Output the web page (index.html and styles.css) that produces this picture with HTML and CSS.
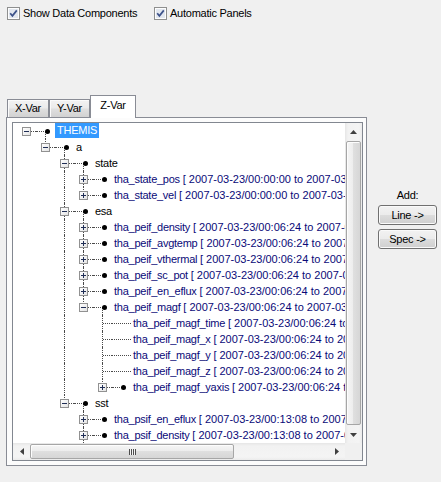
FILE: index.html
```html
<!DOCTYPE html>
<html>
<head>
<meta charset="utf-8">
<link rel="stylesheet" href="styles.css">
</head>
<body>
<div class="options">
  <label class="opt opt-wide">
    <svg class="cb" width="13" height="13" viewBox="0 0 13 13"><rect x=".5" y=".5" width="12" height="12" fill="#fdfdfd" stroke="#8e8f8f"/><rect x="2" y="2" width="9" height="9" fill="#e2e7ef"/><path d="M3.2 6.2 L5.4 8.8 L9.8 3.4" fill="none" stroke="#3d528a" stroke-width="1.7"/></svg>
    <span>Show Data Components</span>
  </label>
  <label class="opt">
    <svg class="cb" width="13" height="13" viewBox="0 0 13 13"><rect x=".5" y=".5" width="12" height="12" fill="#fdfdfd" stroke="#8e8f8f"/><rect x="2" y="2" width="9" height="9" fill="#e2e7ef"/><path d="M3.2 6.2 L5.4 8.8 L9.8 3.4" fill="none" stroke="#3d528a" stroke-width="1.7"/></svg>
    <span>Automatic Panels</span>
  </label>
</div>

<div class="main">
  <div class="tabctl">
    <div class="tabstrip">
      <div class="tab tab-x">X-Var</div>
      <div class="tab tab-y">Y-Var</div>
      <div class="tab tab-z">Z-Var</div>
    </div>
    <div class="tabpage">
      <div class="tree">
        <div class="content">
          <div class="row"><span class="c n"><i class="box minus"></i></span><span class="c h down"><i class="dot"></i></span><span class="label sel">THEMIS</span></div>
          <div class="row"><span class="c"></span><span class="c l"><i class="box minus"></i></span><span class="c h down"><i class="dot"></i></span><span class="label">a</span></div>
          <div class="row"><span class="c"></span><span class="c"></span><span class="c t"><i class="box minus"></i></span><span class="c h down"><i class="dot"></i></span><span class="label">state</span></div>
          <div class="row"><span class="c"></span><span class="c"></span><span class="c v"></span><span class="c t"><i class="box plus"></i></span><span class="c h"><i class="dot"></i></span><span class="label data">tha_state_pos <span class="range">[ 2007-03-23/00:00:00 to 2007-03-24/00:00:00 ]</span></span></div>
          <div class="row"><span class="c"></span><span class="c"></span><span class="c v"></span><span class="c l"><i class="box plus"></i></span><span class="c h"><i class="dot"></i></span><span class="label data">tha_state_vel <span class="range">[ 2007-03-23/00:00:00 to 2007-03-24/00:00:00 ]</span></span></div>
          <div class="row"><span class="c"></span><span class="c"></span><span class="c t"><i class="box minus"></i></span><span class="c h down"><i class="dot"></i></span><span class="label">esa</span></div>
          <div class="row"><span class="c"></span><span class="c"></span><span class="c v"></span><span class="c t"><i class="box plus"></i></span><span class="c h"><i class="dot"></i></span><span class="label data">tha_peif_density <span class="range">[ 2007-03-23/00:06:24 to 2007-03-23/23:57:13 ]</span></span></div>
          <div class="row"><span class="c"></span><span class="c"></span><span class="c v"></span><span class="c t"><i class="box plus"></i></span><span class="c h"><i class="dot"></i></span><span class="label data">tha_peif_avgtemp <span class="range">[ 2007-03-23/00:06:24 to 2007-03-23/23:57:13 ]</span></span></div>
          <div class="row"><span class="c"></span><span class="c"></span><span class="c v"></span><span class="c t"><i class="box plus"></i></span><span class="c h"><i class="dot"></i></span><span class="label data">tha_peif_vthermal <span class="range">[ 2007-03-23/00:06:24 to 2007-03-23/23:57:13 ]</span></span></div>
          <div class="row"><span class="c"></span><span class="c"></span><span class="c v"></span><span class="c t"><i class="box plus"></i></span><span class="c h"><i class="dot"></i></span><span class="label data">tha_peif_sc_pot <span class="range">[ 2007-03-23/00:06:24 to 2007-03-23/23:57:13 ]</span></span></div>
          <div class="row"><span class="c"></span><span class="c"></span><span class="c v"></span><span class="c t"><i class="box plus"></i></span><span class="c h"><i class="dot"></i></span><span class="label data">tha_peif_en_eflux <span class="range">[ 2007-03-23/00:06:24 to 2007-03-23/23:57:13 ]</span></span></div>
          <div class="row"><span class="c"></span><span class="c"></span><span class="c v"></span><span class="c l"><i class="box minus"></i></span><span class="c h down"><i class="dot"></i></span><span class="label data">tha_peif_magf <span class="range">[ 2007-03-23/00:06:24 to 2007-03-23/23:57:13 ]</span></span></div>
          <div class="row"><span class="c"></span><span class="c"></span><span class="c v"></span><span class="c"></span><span class="c t"></span><span class="c h full"></span><span class="label data">tha_peif_magf_time <span class="range">[ 2007-03-23/00:06:24 to 2007-03-23/23:57:13 ]</span></span></div>
          <div class="row"><span class="c"></span><span class="c"></span><span class="c v"></span><span class="c"></span><span class="c t"></span><span class="c h full"></span><span class="label data">tha_peif_magf_x <span class="range">[ 2007-03-23/00:06:24 to 2007-03-23/23:57:13 ]</span></span></div>
          <div class="row"><span class="c"></span><span class="c"></span><span class="c v"></span><span class="c"></span><span class="c t"></span><span class="c h full"></span><span class="label data">tha_peif_magf_y <span class="range">[ 2007-03-23/00:06:24 to 2007-03-23/23:57:13 ]</span></span></div>
          <div class="row"><span class="c"></span><span class="c"></span><span class="c v"></span><span class="c"></span><span class="c t"></span><span class="c h full"></span><span class="label data">tha_peif_magf_z <span class="range">[ 2007-03-23/00:06:24 to 2007-03-23/23:57:13 ]</span></span></div>
          <div class="row"><span class="c"></span><span class="c"></span><span class="c v"></span><span class="c"></span><span class="c l"><i class="box plus"></i></span><span class="c h"><i class="dot"></i></span><span class="label data">tha_peif_magf_yaxis <span class="range">[ 2007-03-23/00:06:24 to 2007-03-23/23:57:13 ]</span></span></div>
          <div class="row"><span class="c"></span><span class="c"></span><span class="c l"><i class="box minus"></i></span><span class="c h down"><i class="dot"></i></span><span class="label">sst</span></div>
          <div class="row"><span class="c"></span><span class="c"></span><span class="c"></span><span class="c t"><i class="box plus"></i></span><span class="c h"><i class="dot"></i></span><span class="label data">tha_psif_en_eflux <span class="range">[ 2007-03-23/00:13:08 to 2007-03-23/23:54:32 ]</span></span></div>
          <div class="row"><span class="c"></span><span class="c"></span><span class="c"></span><span class="c t"><i class="box plus"></i></span><span class="c h"><i class="dot"></i></span><span class="label data">tha_psif_density <span class="range">[ 2007-03-23/00:13:08 to 2007-03-23/23:54:32 ]</span></span></div>
          <div class="row"><span class="c"></span><span class="c"></span><span class="c"></span><span class="c t"><i class="box plus"></i></span><span class="c h"><i class="dot"></i></span><span class="label data">tha_psif_avgtemp <span class="range">[ 2007-03-23/00:13:08 to 2007-03-23/23:54:32 ]</span></span></div>
        </div>
        <div class="vscroll">
          <div class="sbtn"><svg width="7" height="4" viewBox="0 0 7 4"><polygon points="0,4 3.5,0 7,4" fill="#404040"/></svg></div>
          <div class="vthumb"></div>
          <div class="sbtn"><svg width="7" height="4" viewBox="0 0 7 4"><polygon points="0,0 7,0 3.5,4" fill="#404040"/></svg></div>
        </div>
        <div class="hscroll">
          <div class="sbtn hbtn"><svg width="4" height="7" viewBox="0 0 4 7"><polygon points="4,0 4,7 0,3.5" fill="#404040"/></svg></div>
          <div class="hthumb"><span class="grip"></span></div>
          <div class="htrack"></div>
          <div class="sbtn hbtn"><svg width="4" height="7" viewBox="0 0 4 7"><polygon points="0,0 4,3.5 0,7" fill="#404040"/></svg></div>
        </div>
        <div class="corner"></div>
      </div>
    </div>
  </div>

  <div class="side">
    <div class="add">Add:</div>
    <button class="btn">Line -&gt;</button>
    <button class="btn">Spec -&gt;</button>
  </div>
</div>
</body>
</html>
```

FILE: styles.css
```css
* { box-sizing: border-box; }

html, body { margin: 0; padding: 0; }

body {
  width: 441px;
  height: 482px;
  overflow: hidden;
  background: #f0f0f0;
  font-family: "Liberation Sans", Arial, sans-serif;
  font-size: 11px;
  letter-spacing: -0.25px;
  color: #000;
}

/* top option checkboxes */
.options {
  height: 95px;
  display: flex;
  align-items: flex-start;
  padding: 7px 0 0 7px;
}

.opt {
  display: flex;
  align-items: center;
  gap: 3px;
  height: 13px;
  line-height: 13px;
}

.opt-wide { width: 147px; }

.cb { display: block; flex: none; }

/* tab control */
.main {
  display: flex;
  align-items: flex-start;
}

.tabctl {
  margin-left: 6px;
  width: 361px;
}

.tabstrip {
  display: flex;
  align-items: flex-end;
  height: 22px;
  padding-left: 1px;
}

.tab {
  height: 18px;
  border: 1px solid #898c95;
  border-bottom: 0;
  background: linear-gradient(#f3f3f3, #ebebeb 45%, #dedede 55%, #d2d2d2);
  box-shadow: inset 1px 1px 0 #fbfbfb;
  text-align: center;
  line-height: 16px;
}

.tab-x { width: 42px; }
.tab-y { width: 41px; }

.tab-z {
  width: 46px;
  height: 23px;
  margin-bottom: -1px;
  background: #fff;
  box-shadow: none;
  position: relative;
  z-index: 1;
  line-height: 19px;
}

.tabpage {
  height: 349px;
  border: 1px solid #898c95;
  background: #fcfcfc;
  padding: 4px 3px 4px 5px;
}

/* tree view */
.tree {
  width: 351px;
  height: 339px;
  border: 1px solid #828790;
  background: #fff;
  display: grid;
  grid-template-columns: 332px 17px;
  grid-template-rows: 320px 17px;
}

.content {
  overflow: hidden;
  padding-left: 4px;
}

.row {
  display: flex;
  height: 16px;
  white-space: nowrap;
}

.c {
  position: relative;
  flex: none;
  width: 19px;
  height: 16px;
}

.v::before,
.t::before,
.l::before,
.down::before {
  content: "";
  position: absolute;
  left: 9px;
  top: 0;
  bottom: 0;
  border-left: 1px dotted #4a4a4a;
}

.l::before { bottom: auto; height: 9px; }
.down::before { top: 8px; }

.n::after,
.t::after,
.l::after,
.h::after {
  content: "";
  position: absolute;
  left: 10px;
  right: 0;
  top: 8px;
  border-top: 1px dotted #4a4a4a;
}

.h::after { left: 0; right: auto; width: 10px; }
.h.full::after { width: 19px; }

.dot {
  position: absolute;
  left: 9px;
  top: 6px;
  width: 5px;
  height: 5px;
  border-radius: 50%;
  background: #000;
  z-index: 1;
}

.box {
  position: absolute;
  left: 5px;
  top: 4px;
  width: 9px;
  height: 9px;
  border: 1px solid #919191;
  background: linear-gradient(135deg, #ffffff, #e4e4e4);
  z-index: 1;
}

.box::before {
  content: "";
  position: absolute;
  left: 1px;
  top: 3px;
  width: 5px;
  height: 1px;
  background: #1f2d55;
}

.plus::after {
  content: "";
  position: absolute;
  left: 3px;
  top: 1px;
  width: 1px;
  height: 5px;
  background: #1f2d55;
}

.label {
  padding: 0 2px;
  line-height: 16px;
  height: 16px;
}

.label.sel {
  background: #3399ff;
  color: #fff;
  height: 15px;
  line-height: 15px;
}

.data { color: #0a0a78; }

.range { letter-spacing: 0; }

/* scrollbars */
.vscroll {
  display: flex;
  flex-direction: column;
  background: linear-gradient(to right, #e6e6e6, #f2f2f2 3px, #f4f4f4 14px, #ebebeb);
}

.sbtn {
  flex: none;
  height: 17px;
  display: flex;
  align-items: center;
  justify-content: center;
}

.sbtn svg { display: block; }

.vthumb {
  flex: 1;
  margin: 1px 1px;
  border: 1px solid #a6a6a6;
  border-radius: 2px;
  background: linear-gradient(to right, #f6f6f6, #ececec 50%, #dfdfdf 50%, #d6d6d6);
  box-shadow: inset 1px 1px 0 #fdfdfd;
}

.hscroll {
  display: flex;
  background: linear-gradient(#e6e6e6, #f2f2f2 3px, #f4f4f4 14px, #ebebeb);
}

.hbtn { width: 17px; height: 17px; }

.hthumb {
  flex: none;
  width: 204px;
  margin: 1px 0;
  border: 1px solid #a6a6a6;
  border-radius: 2px;
  background: linear-gradient(#f6f6f6, #ececec 50%, #dfdfdf 50%, #d6d6d6);
  box-shadow: inset 1px 1px 0 #fdfdfd;
  display: flex;
  align-items: center;
  justify-content: center;
}

.grip {
  width: 7px;
  height: 6px;
  background: repeating-linear-gradient(to right, #4d4d4d 0 1px, #f4f4f4 1px 2px);
}

.htrack { flex: 1; }

.corner { background: #f0f0f0; }

/* side buttons */
.side {
  margin-left: 11px;
  margin-top: 94px;
  width: 59px;
  display: flex;
  flex-direction: column;
  align-items: center;
}

.add {
  height: 13px;
  line-height: 13px;
  margin-bottom: 3px;
}

.btn {
  width: 59px;
  height: 20px;
  margin: 0 0 4px;
  padding: 0;
  border: 1px solid #707070;
  border-radius: 3px;
  background: linear-gradient(#f2f2f2, #ebebeb 50%, #dddddd 50%, #cfcfcf);
  box-shadow: inset 0 0 0 1px #fafafa;
  font: inherit;
  letter-spacing: inherit;
  color: #000;
  line-height: 18px;
  text-align: center;
}
```
